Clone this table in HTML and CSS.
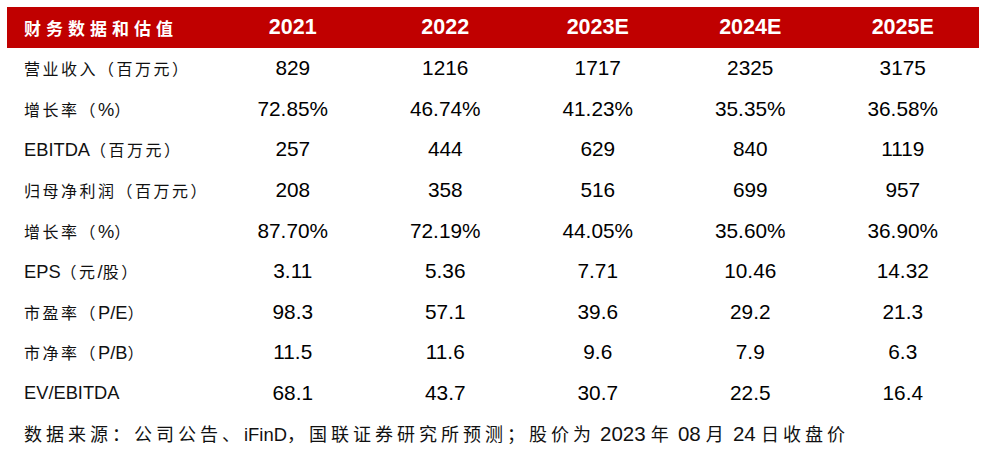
FILE: index.html
```html
<!DOCTYPE html>
<html lang="zh-CN">
<head>
<meta charset="utf-8">
<title>财务数据和估值</title>
<link rel="stylesheet" href="styles.css">
</head>
<body>
<div class="table">
  <div class="row head">
    <div class="label"><span class="cjk-h">财务数据和估值</span></div>
    <div class="cell">2021</div><div class="cell">2022</div><div class="cell">2023E</div><div class="cell">2024E</div><div class="cell">2025E</div>
  </div>
  <div class="row">
    <div class="label"><span class="cjk">营业收入（百万元）</span></div>
    <div class="cell">829</div><div class="cell">1216</div><div class="cell">1717</div><div class="cell">2325</div><div class="cell">3175</div>
  </div>
  <div class="row">
    <div class="label"><span class="cjk">增长率（</span>%<span class="cjk">）</span></div>
    <div class="cell">72.85%</div><div class="cell">46.74%</div><div class="cell">41.23%</div><div class="cell">35.35%</div><div class="cell">36.58%</div>
  </div>
  <div class="row">
    <div class="label">EBITDA<span class="cjk">（百万元）</span></div>
    <div class="cell">257</div><div class="cell">444</div><div class="cell">629</div><div class="cell">840</div><div class="cell">1119</div>
  </div>
  <div class="row">
    <div class="label"><span class="cjk">归母净利润（百万元）</span></div>
    <div class="cell">208</div><div class="cell">358</div><div class="cell">516</div><div class="cell">699</div><div class="cell">957</div>
  </div>
  <div class="row">
    <div class="label"><span class="cjk">增长率（</span>%<span class="cjk">）</span></div>
    <div class="cell">87.70%</div><div class="cell">72.19%</div><div class="cell">44.05%</div><div class="cell">35.60%</div><div class="cell">36.90%</div>
  </div>
  <div class="row">
    <div class="label">EPS<span class="cjk">（元</span>/<span class="cjk">股）</span></div>
    <div class="cell">3.11</div><div class="cell">5.36</div><div class="cell">7.71</div><div class="cell">10.46</div><div class="cell">14.32</div>
  </div>
  <div class="row">
    <div class="label"><span class="cjk">市盈率（</span>P/E<span class="cjk">）</span></div>
    <div class="cell">98.3</div><div class="cell">57.1</div><div class="cell">39.6</div><div class="cell">29.2</div><div class="cell">21.3</div>
  </div>
  <div class="row">
    <div class="label"><span class="cjk">市净率（</span>P/B<span class="cjk">）</span></div>
    <div class="cell">11.5</div><div class="cell">11.6</div><div class="cell">9.6</div><div class="cell">7.9</div><div class="cell">6.3</div>
  </div>
  <div class="row">
    <div class="label">EV/EBITDA</div>
    <div class="cell">68.1</div><div class="cell">43.7</div><div class="cell">30.7</div><div class="cell">22.5</div><div class="cell">16.4</div>
  </div>
</div>
<p class="source"><span class="cjk-f">数据来源：公司公告、</span>iFinD<span class="cjk-f">，国联证券研究所预测；股价为</span> <span class="num">2023</span> <span class="cjk-f">年</span> <span class="num">08</span> <span class="cjk-f">月</span> <span class="num">24</span> <span class="cjk-f">日收盘价</span></p>
</body>
</html>
```

FILE: styles.css
```css
html, body {
  margin: 0;
  padding: 0;
  background: #ffffff;
}
body {
  padding: 7px 0 0 7px;
  font-family: "Liberation Sans", Arial, "Noto Sans CJK SC", sans-serif;
  color: #000;
}
.table {
  width: 972px;
}
.row {
  display: grid;
  grid-template-columns: 209.5px repeat(5, 152.5px);
  height: 40.6px;
  align-items: center;
}
.row.head {
  height: 41px;
  background: #c00000;
  color: #fff;
}
.label {
  padding-left: 17px;
  font-size: 18.3px;
  white-space: nowrap;
  color: #111;
}
.head .label {
  color: #fff;
}
.cell {
  text-align: center;
  font-size: 20.8px;
}
.head .cell {
  font-weight: 700;
  font-size: 21.5px;
}
.cjk {
  font-family: "Noto Sans CJK SC", sans-serif;
  font-size: 16px;
  letter-spacing: 2.5px;
  font-weight: 400;
}
.cjk-h {
  font-family: "Noto Sans CJK SC", sans-serif;
  font-size: 17px;
  letter-spacing: 5px;
  font-weight: 700;
}
.source {
  margin: 0;
  height: 41px;
  line-height: 41px;
  padding-left: 17px;
  font-size: 18.4px;
  white-space: pre;
  color: #111;
}
.cjk-f {
  font-family: "Noto Sans CJK SC", sans-serif;
  font-size: 18px;
  letter-spacing: 4px;
}
.num {
  font-size: 20.5px;
}
```
